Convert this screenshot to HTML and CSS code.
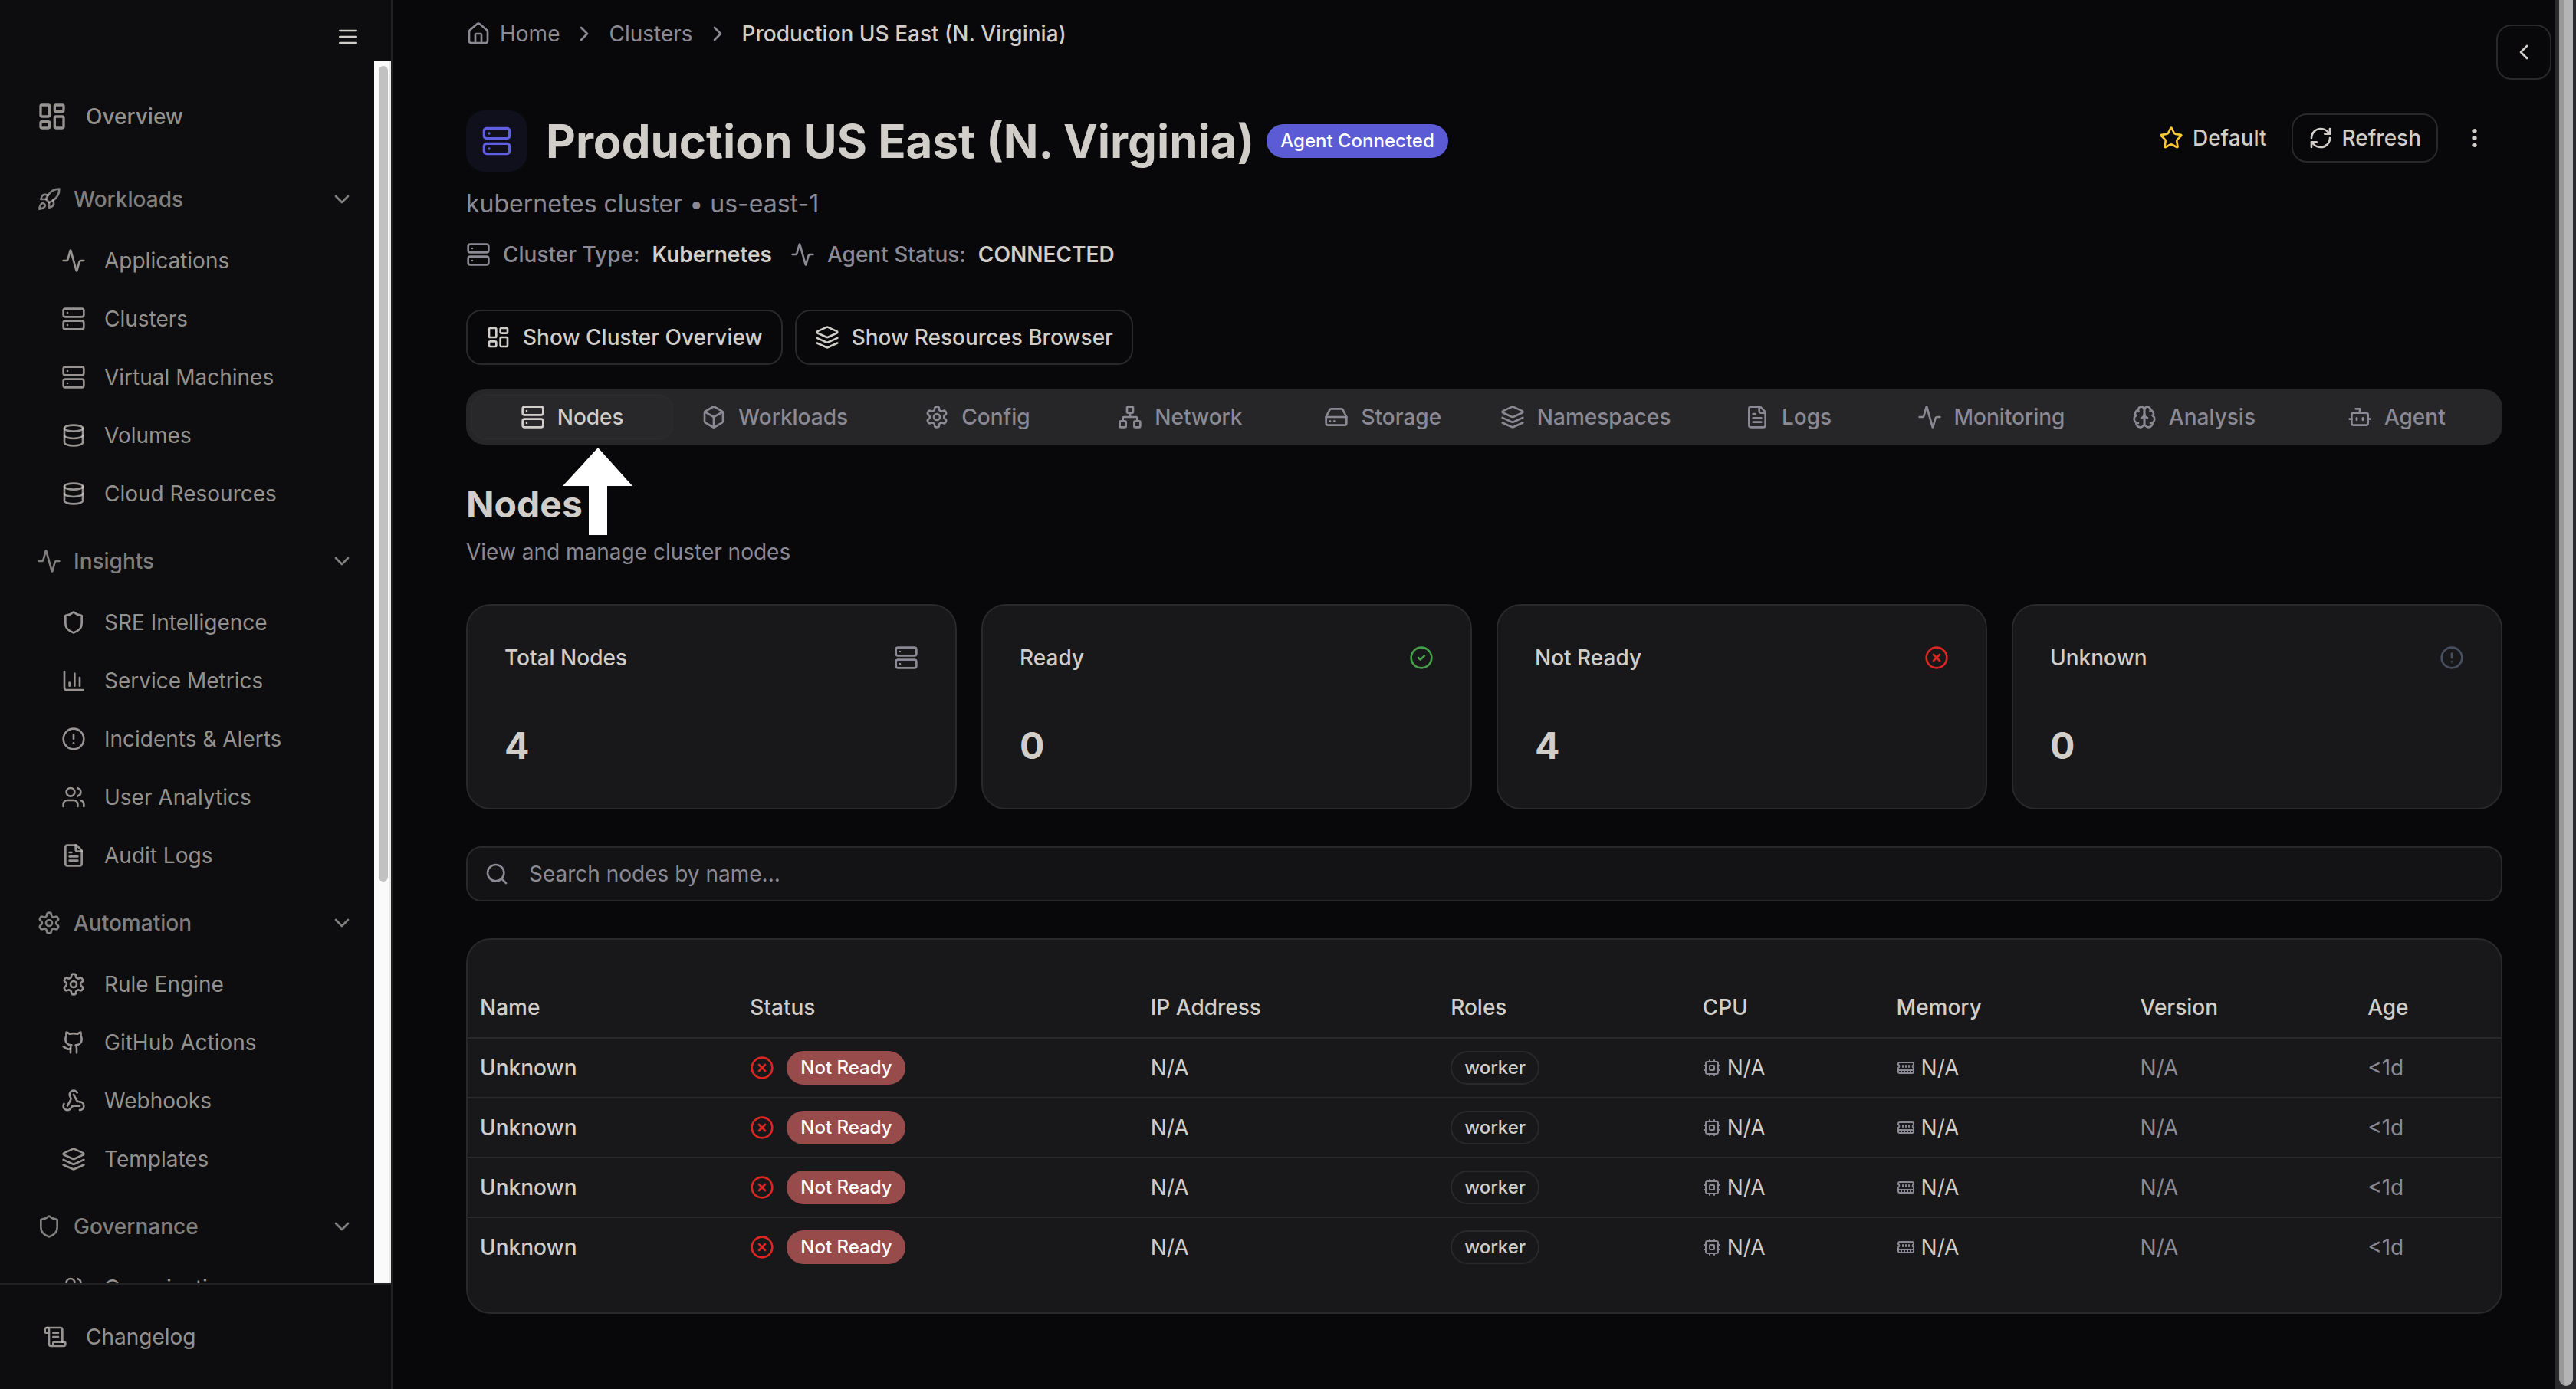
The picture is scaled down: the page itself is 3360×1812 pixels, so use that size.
FILE: index.html
```html
<!DOCTYPE html>
<html lang="en">
<head>
    <meta charset="UTF-8">
    <meta name="viewport" content="width=device-width, initial-scale=1.0">
    <title>Production US East (N. Virginia)</title>
    <link rel="stylesheet" href="styles.css">
</head>
<body>

    <!-- Icon sprite -->
    <svg class="sprite" aria-hidden="true">
        <symbol id="i-menu" viewBox="0 0 24 24"><path d="M4 6h16M4 12h16M4 18h16"/></symbol>
        <symbol id="i-dashboard" viewBox="0 0 24 24"><rect x="3" y="3" width="7" height="9" rx="1"/><rect x="14" y="3" width="7" height="5" rx="1"/><rect x="14" y="12" width="7" height="9" rx="1"/><rect x="3" y="16" width="7" height="5" rx="1"/></symbol>
        <symbol id="i-rocket" viewBox="0 0 24 24"><path d="M4.500 16.500c-1.500 1.260-2 5-2 5s3.740-.5 5-2c.71-.84.7-2.130-.09-2.910a2.180 2.180 0 0 0-2.910-.09z"/><path d="m12 15-3-3a22 22 0 0 1 2-3.950A12.880 12.880 0 0 1 22 2c0 2.720-.78 7.500-6 11a22.350 22.350 0 0 1-4 2z"/><path d="M9 12H4s.55-3.030 2-4c1.620-1.080 5 0 5 0"/><path d="M12 15v5s3.030-.55 4-2c1.080-1.620 0-5 0-5"/></symbol>
        <symbol id="i-activity" viewBox="0 0 24 24"><path d="M22 12h-2.480a2 2 0 0 0-1.930 1.460l-2.350 8.360a.25.25 0 0 1-.48 0L9.240 2.180a.25.25 0 0 0-.48 0l-2.350 8.360A2 2 0 0 1 4.490 12H2"/></symbol>
        <symbol id="i-server" viewBox="0 0 24 24"><rect x="2" y="2" width="20" height="8" rx="2"/><rect x="2" y="14" width="20" height="8" rx="2"/><path d="M6 6h.01"/><path d="M6 18h.01"/></symbol>
        <symbol id="i-database" viewBox="0 0 24 24"><ellipse cx="12" cy="5" rx="9" ry="3"/><path d="M3 5V19A9 3 0 0 0 21 19V5"/><path d="M3 12A9 3 0 0 0 21 12"/></symbol>
        <symbol id="i-shield" viewBox="0 0 24 24"><path d="M20 13c0 5-3.500 7.500-7.660 8.950a1 1 0 0 1-.67-.01C7.500 20.500 4 18 4 13V6a1 1 0 0 1 1-1c2 0 4.500-1.200 6.240-2.720a1.170 1.170 0 0 1 1.520 0C14.510 3.810 17 5 19 5a1 1 0 0 1 1 1z"/></symbol>
        <symbol id="i-chart" viewBox="0 0 24 24"><path d="M3 3v16a2 2 0 0 0 2 2h16"/><path d="M18 17V9"/><path d="M13 17V5"/><path d="M8 17v-3"/></symbol>
        <symbol id="i-alert" viewBox="0 0 24 24"><circle cx="12" cy="12" r="10"/><path d="M12 8v4"/><path d="M12 16h.01"/></symbol>
        <symbol id="i-users" viewBox="0 0 24 24"><path d="M16 21v-2a4 4 0 0 0-4-4H6a4 4 0 0 0-4 4v2"/><circle cx="9" cy="7" r="4"/><path d="M22 21v-2a4 4 0 0 0-3-3.870"/><path d="M16 3.130a4 4 0 0 1 0 7.750"/></symbol>
        <symbol id="i-file" viewBox="0 0 24 24"><path d="M15 2H6a2 2 0 0 0-2 2v16a2 2 0 0 0 2 2h12a2 2 0 0 0 2-2V7Z"/><path d="M14 2v4a2 2 0 0 0 2 2h4"/><path d="M10 9H8"/><path d="M16 13H8"/><path d="M16 17H8"/></symbol>
        <symbol id="i-settings" viewBox="0 0 24 24"><path d="M12.220 2h-.44a2 2 0 0 0-2 2v.18a2 2 0 0 1-1 1.730l-.43.25a2 2 0 0 1-2 0l-.15-.08a2 2 0 0 0-2.730.73l-.22.38a2 2 0 0 0 .73 2.730l.15.1a2 2 0 0 1 1 1.720v.51a2 2 0 0 1-1 1.740l-.15.09a2 2 0 0 0-.73 2.730l.22.38a2 2 0 0 0 2.730.73l.15-.08a2 2 0 0 1 2 0l.43.25a2 2 0 0 1 1 1.730V20a2 2 0 0 0 2 2h.44a2 2 0 0 0 2-2v-.18a2 2 0 0 1 1-1.730l.43-.25a2 2 0 0 1 2 0l.15.08a2 2 0 0 0 2.730-.73l.22-.39a2 2 0 0 0-.73-2.730l-.15-.08a2 2 0 0 1-1-1.740v-.5a2 2 0 0 1 1-1.740l.15-.09a2 2 0 0 0 .73-2.730l-.22-.38a2 2 0 0 0-2.730-.73l-.15.08a2 2 0 0 1-2 0l-.43-.25a2 2 0 0 1-1-1.730V4a2 2 0 0 0-2-2z"/><circle cx="12" cy="12" r="3"/></symbol>
        <symbol id="i-github" viewBox="0 0 24 24"><path d="M15 22v-4a4.800 4.800 0 0 0-1-3.500c3 0 6-2 6-5.500.08-1.250-.27-2.480-1-3.500.28-1.150.28-2.350 0-3.500 0 0-1 0-3 1.500-2.640-.5-5.360-.5-8 0C6 2 5 2 5 2c-.3 1.150-.3 2.350 0 3.500A5.403 5.403 0 0 0 4 9c0 3.500 3 5.500 6 5.500-.39.49-.68 1.050-.85 1.650-.17.6-.22 1.230-.15 1.850v4"/><path d="M9 18c-4.510 2-5-2-7-2"/></symbol>
        <symbol id="i-webhook" viewBox="0 0 24 24"><path d="M18 16.980h-5.990c-1.100 0-1.950.94-2.480 1.900A4 4 0 0 1 2 17c.01-.7.2-1.400.57-2"/><path d="m6 17 3.130-5.780c.53-.97.1-2.180-.5-3.100a4 4 0 1 1 6.890-4.060"/><path d="m12 6 3.130 5.730C15.660 12.700 16.900 13 18 13a4 4 0 0 1 0 8"/></symbol>
        <symbol id="i-layers" viewBox="0 0 24 24"><path d="M12.830 2.180a2 2 0 0 0-1.660 0L2.600 6.080a1 1 0 0 0 0 1.830l8.580 3.910a2 2 0 0 0 1.660 0l8.580-3.900a1 1 0 0 0 0-1.830Z"/><path d="m22 17.650-9.170 4.160a2 2 0 0 1-1.660 0L2 17.650"/><path d="m22 12.650-9.170 4.160a2 2 0 0 1-1.660 0L2 12.650"/></symbol>
        <symbol id="i-scroll" viewBox="0 0 24 24"><path d="M15 12h-5"/><path d="M15 8h-5"/><path d="M19 17V5a2 2 0 0 0-2-2H4"/><path d="M8 21h12a2 2 0 0 0 2-2v-1a1 1 0 0 0-1-1H11a1 1 0 0 0-1 1v1a2 2 0 1 1-4 0V5a2 2 0 1 0-4 0v2a1 1 0 0 0 1 1h3"/></symbol>
        <symbol id="i-down" viewBox="0 0 24 24"><path d="m6 9 6 6 6-6"/></symbol>
        <symbol id="i-right" viewBox="0 0 24 24"><path d="m9 18 6-6-6-6"/></symbol>
        <symbol id="i-left" viewBox="0 0 24 24"><path d="m15 18-6-6 6-6"/></symbol>
        <symbol id="i-home" viewBox="0 0 24 24"><path d="M15 21v-8a1 1 0 0 0-1-1h-4a1 1 0 0 0-1 1v8"/><path d="M3 10a2 2 0 0 1 .709-1.528l7-5.999a2 2 0 0 1 2.582 0l7 5.999A2 2 0 0 1 21 10v9a2 2 0 0 1-2 2H5a2 2 0 0 1-2-2z"/></symbol>
        <symbol id="i-star" viewBox="0 0 24 24"><path d="M11.525 2.295a.53.53 0 0 1 .95 0l2.310 4.679a2.123 2.123 0 0 0 1.595 1.160l5.166.756a.53.53 0 0 1 .294.904l-3.736 3.638a2.123 2.123 0 0 0-.611 1.878l.882 5.140a.53.53 0 0 1-.771.560l-4.618-2.428a2.122 2.122 0 0 0-1.973 0L6.396 21.010a.53.53 0 0 1-.77-.560l.881-5.139a2.122 2.122 0 0 0-.611-1.879L2.160 9.795a.53.53 0 0 1 .294-.906l5.165-.755a2.122 2.122 0 0 0 1.597-1.160z"/></symbol>
        <symbol id="i-refresh" viewBox="0 0 24 24"><path d="M3 12a9 9 0 0 1 9-9 9.750 9.750 0 0 1 6.740 2.740L21 8"/><path d="M21 3v5h-5"/><path d="M21 12a9 9 0 0 1-9 9 9.750 9.750 0 0 1-6.740-2.740L3 16"/><path d="M8 16H3v5"/></symbol>
        <symbol id="i-more" viewBox="0 0 24 24"><circle cx="12" cy="12" r="1"/><circle cx="12" cy="5" r="1"/><circle cx="12" cy="19" r="1"/></symbol>
        <symbol id="i-box" viewBox="0 0 24 24"><path d="M21 8a2 2 0 0 0-1-1.730l-7-4a2 2 0 0 0-2 0l-7 4A2 2 0 0 0 3 8v8a2 2 0 0 0 1 1.730l7 4a2 2 0 0 0 2 0l7-4A2 2 0 0 0 21 16Z"/><path d="m3.300 7 8.700 5 8.700-5"/><path d="M12 22V12"/></symbol>
        <symbol id="i-network" viewBox="0 0 24 24"><rect x="16" y="16" width="6" height="6" rx="1"/><rect x="2" y="16" width="6" height="6" rx="1"/><rect x="9" y="2" width="6" height="6" rx="1"/><path d="M5 16v-3a1 1 0 0 1 1-1h12a1 1 0 0 1 1 1v3"/><path d="M12 12V8"/></symbol>
        <symbol id="i-drive" viewBox="0 0 24 24"><path d="M22 12H2"/><path d="M5.450 5.110 2 12v6a2 2 0 0 0 2 2h16a2 2 0 0 0 2-2v-6l-3.450-6.890A2 2 0 0 0 16.760 4H7.240a2 2 0 0 0-1.790 1.110z"/><path d="M6 16h.01"/><path d="M10 16h.01"/></symbol>
        <symbol id="i-brain" viewBox="0 0 24 24"><path d="M12 5a3 3 0 1 0-5.997.125 4 4 0 0 0-2.526 5.770 4 4 0 0 0 .556 6.588A4 4 0 1 0 12 18Z"/><path d="M12 5a3 3 0 1 1 5.997.125 4 4 0 0 1 2.526 5.770 4 4 0 0 1-.556 6.588A4 4 0 1 1 12 18Z"/><path d="M15 13a4.500 4.500 0 0 1-3-4 4.500 4.500 0 0 1-3 4"/><path d="M17.599 6.500a3 3 0 0 0 .399-1.375"/><path d="M6.003 5.125A3 3 0 0 0 6.401 6.500"/><path d="M3.477 10.896a4 4 0 0 1 .585-.396"/><path d="M19.938 10.500a4 4 0 0 1 .585.396"/><path d="M6 18a4 4 0 0 1-1.967-.516"/><path d="M19.967 17.484A4 4 0 0 1 18 18"/></symbol>
        <symbol id="i-bot" viewBox="0 0 24 24"><path d="M12 8V4H8"/><rect x="4" y="8" width="16" height="12" rx="2"/><path d="M2 14h2"/><path d="M20 14h2"/><path d="M15 13v2"/><path d="M9 13v2"/></symbol>
        <symbol id="i-check" viewBox="0 0 24 24"><circle cx="12" cy="12" r="10"/><path d="m9 12 2 2 4-4"/></symbol>
        <symbol id="i-x" viewBox="0 0 24 24"><circle cx="12" cy="12" r="10"/><path d="m15 9-6 6"/><path d="m9 9 6 6"/></symbol>
        <symbol id="i-search" viewBox="0 0 24 24"><circle cx="11" cy="11" r="8"/><path d="m21 21-4.300-4.300"/></symbol>
        <symbol id="i-cpu" viewBox="0 0 24 24"><rect x="4" y="4" width="16" height="16" rx="2"/><rect x="9" y="9" width="6" height="6" rx="1"/><path d="M15 2v2M15 20v2M2 15h2M2 9h2M20 15h2M20 9h2M9 2v2M9 20v2"/></symbol>
        <symbol id="i-memory" viewBox="0 0 24 24"><path d="M6 19v-3M10 19v-3M14 19v-3M18 19v-3M8 11V9M16 11V9M12 11V9M2 15h20"/><path d="M2 7a2 2 0 0 1 2-2h16a2 2 0 0 1 2 2v1.100a2 2 0 0 0 0 3.837V17a2 2 0 0 1-2 2H4a2 2 0 0 1-2-2v-5.100a2 2 0 0 0 0-3.837Z"/></symbol>
    </svg>

    <div class="app">

        <aside class="sidebar">
            <div class="sidebar-top">
                <button class="icon-btn" aria-label="Toggle sidebar"><svg class="icon"><use href="#i-menu"/></svg></button>
            </div>

            <div class="sidebar-scroll">
                <nav class="nav">
                    <a class="nav-main" href="#"><svg class="icon icon-lg"><use href="#i-dashboard"/></svg>Overview</a>

                    <div class="nav-group">
                        <button class="nav-head"><svg class="icon"><use href="#i-rocket"/></svg><span>Workloads</span><svg class="icon"><use href="#i-down"/></svg></button>
                        <a class="nav-item" href="#"><svg class="icon"><use href="#i-activity"/></svg>Applications</a>
                        <a class="nav-item" href="#"><svg class="icon"><use href="#i-server"/></svg>Clusters</a>
                        <a class="nav-item" href="#"><svg class="icon"><use href="#i-server"/></svg>Virtual Machines</a>
                        <a class="nav-item" href="#"><svg class="icon"><use href="#i-database"/></svg>Volumes</a>
                        <a class="nav-item" href="#"><svg class="icon"><use href="#i-database"/></svg>Cloud Resources</a>
                    </div>

                    <div class="nav-group">
                        <button class="nav-head"><svg class="icon"><use href="#i-activity"/></svg><span>Insights</span><svg class="icon"><use href="#i-down"/></svg></button>
                        <a class="nav-item" href="#"><svg class="icon"><use href="#i-shield"/></svg>SRE Intelligence</a>
                        <a class="nav-item" href="#"><svg class="icon"><use href="#i-chart"/></svg>Service Metrics</a>
                        <a class="nav-item" href="#"><svg class="icon"><use href="#i-alert"/></svg>Incidents &amp; Alerts</a>
                        <a class="nav-item" href="#"><svg class="icon"><use href="#i-users"/></svg>User Analytics</a>
                        <a class="nav-item" href="#"><svg class="icon"><use href="#i-file"/></svg>Audit Logs</a>
                    </div>

                    <div class="nav-group">
                        <button class="nav-head"><svg class="icon"><use href="#i-settings"/></svg><span>Automation</span><svg class="icon"><use href="#i-down"/></svg></button>
                        <a class="nav-item" href="#"><svg class="icon"><use href="#i-settings"/></svg>Rule Engine</a>
                        <a class="nav-item" href="#"><svg class="icon"><use href="#i-github"/></svg>GitHub Actions</a>
                        <a class="nav-item" href="#"><svg class="icon"><use href="#i-webhook"/></svg>Webhooks</a>
                        <a class="nav-item" href="#"><svg class="icon"><use href="#i-layers"/></svg>Templates</a>
                    </div>

                    <div class="nav-group">
                        <button class="nav-head"><svg class="icon"><use href="#i-shield"/></svg><span>Governance</span><svg class="icon"><use href="#i-down"/></svg></button>
                        <a class="nav-item" href="#"><svg class="icon"><use href="#i-users"/></svg>Organizations</a>
                    </div>
                </nav>
                <div class="nav-track"><div class="nav-thumb"></div></div>
            </div>

            <div class="sidebar-foot">
                <a class="nav-main" href="#"><svg class="icon"><use href="#i-scroll"/></svg>Changelog</a>
            </div>
        </aside>

        <main class="main">
            <button class="panel-toggle" aria-label="Open panel"><svg class="icon"><use href="#i-left"/></svg></button>

            <nav class="breadcrumb" aria-label="Breadcrumb">
                <a class="crumb" href="#"><svg class="icon"><use href="#i-home"/></svg>Home</a>
                <svg class="icon"><use href="#i-right"/></svg>
                <a class="crumb" href="#">Clusters</a>
                <svg class="icon"><use href="#i-right"/></svg>
                <span class="crumb-current">Production US East (N. Virginia)</span>
            </nav>

            <header class="page-head">
                <div class="page-info">
                    <div class="title-row">
                        <div class="title-icon"><svg class="icon icon-lg"><use href="#i-server"/></svg></div>
                        <h1>Production US East (N. Virginia)</h1>
                        <span class="badge badge-primary">Agent Connected</span>
                    </div>
                    <p class="page-sub">kubernetes cluster • us-east-1</p>
                    <div class="meta">
                        <div class="meta-item"><svg class="icon"><use href="#i-server"/></svg><span>Cluster Type:</span><strong>Kubernetes</strong></div>
                        <div class="meta-item"><svg class="icon"><use href="#i-activity"/></svg><span>Agent Status:</span><strong>CONNECTED</strong></div>
                    </div>
                </div>
                <div class="actions">
                    <button class="btn btn-sm btn-ghost"><svg class="icon star"><use href="#i-star"/></svg>Default</button>
                    <button class="btn btn-sm"><svg class="icon"><use href="#i-refresh"/></svg>Refresh</button>
                    <button class="btn btn-sm btn-ghost" aria-label="More"><svg class="icon"><use href="#i-more"/></svg></button>
                </div>
            </header>

            <div class="toggles">
                <button class="btn"><svg class="icon"><use href="#i-dashboard"/></svg>Show Cluster Overview</button>
                <button class="btn"><svg class="icon"><use href="#i-layers"/></svg>Show Resources Browser</button>
            </div>

            <div class="tabs" role="tablist">
                <button class="tab active" role="tab" aria-selected="true"><svg class="icon"><use href="#i-server"/></svg>Nodes</button>
                <button class="tab" role="tab"><svg class="icon"><use href="#i-box"/></svg>Workloads</button>
                <button class="tab" role="tab"><svg class="icon"><use href="#i-settings"/></svg>Config</button>
                <button class="tab" role="tab"><svg class="icon"><use href="#i-network"/></svg>Network</button>
                <button class="tab" role="tab"><svg class="icon"><use href="#i-drive"/></svg>Storage</button>
                <button class="tab" role="tab"><svg class="icon"><use href="#i-layers"/></svg>Namespaces</button>
                <button class="tab" role="tab"><svg class="icon"><use href="#i-file"/></svg>Logs</button>
                <button class="tab" role="tab"><svg class="icon"><use href="#i-activity"/></svg>Monitoring</button>
                <button class="tab" role="tab"><svg class="icon"><use href="#i-brain"/></svg>Analysis</button>
                <button class="tab" role="tab"><svg class="icon"><use href="#i-bot"/></svg>Agent</button>
            </div>

            <section class="section">
                <svg class="pointer" viewBox="0 0 92 114" aria-hidden="true"><path d="M46 0 91 50H58v64H34V50H0z"/></svg>
                <h2>Nodes</h2>
                <p>View and manage cluster nodes</p>
            </section>

            <div class="cards">
                <div class="card">
                    <div class="card-head"><h3>Total Nodes</h3><svg class="icon muted"><use href="#i-server"/></svg></div>
                    <div class="card-value">4</div>
                </div>
                <div class="card">
                    <div class="card-head"><h3>Ready</h3><svg class="icon green"><use href="#i-check"/></svg></div>
                    <div class="card-value">0</div>
                </div>
                <div class="card">
                    <div class="card-head"><h3>Not Ready</h3><svg class="icon red"><use href="#i-x"/></svg></div>
                    <div class="card-value">4</div>
                </div>
                <div class="card">
                    <div class="card-head"><h3>Unknown</h3><svg class="icon slate"><use href="#i-alert"/></svg></div>
                    <div class="card-value">0</div>
                </div>
            </div>

            <label class="search">
                <svg class="icon"><use href="#i-search"/></svg>
                <input type="text" placeholder="Search nodes by name..." aria-label="Search nodes by name">
            </label>

            <div class="table-card">
                <table>
                    <thead>
                        <tr><th>Name</th><th>Status</th><th>IP Address</th><th>Roles</th><th>CPU</th><th>Memory</th><th>Version</th><th>Age</th></tr>
                    </thead>
                    <tbody>
                        <tr>
                            <td class="name">Unknown</td>
                            <td><div class="cell cell-status"><svg class="icon red"><use href="#i-x"/></svg><span class="badge badge-danger">Not Ready</span></div></td>
                            <td>N/A</td>
                            <td><div class="cell"><span class="badge badge-outline">worker</span></div></td>
                            <td><div class="cell"><svg class="icon icon-sm muted"><use href="#i-cpu"/></svg>N/A</div></td>
                            <td><div class="cell"><svg class="icon icon-sm muted"><use href="#i-memory"/></svg>N/A</div></td>
                            <td class="muted">N/A</td>
                            <td class="muted">&lt;1d</td>
                        </tr>
                        <tr>
                            <td class="name">Unknown</td>
                            <td><div class="cell cell-status"><svg class="icon red"><use href="#i-x"/></svg><span class="badge badge-danger">Not Ready</span></div></td>
                            <td>N/A</td>
                            <td><div class="cell"><span class="badge badge-outline">worker</span></div></td>
                            <td><div class="cell"><svg class="icon icon-sm muted"><use href="#i-cpu"/></svg>N/A</div></td>
                            <td><div class="cell"><svg class="icon icon-sm muted"><use href="#i-memory"/></svg>N/A</div></td>
                            <td class="muted">N/A</td>
                            <td class="muted">&lt;1d</td>
                        </tr>
                        <tr>
                            <td class="name">Unknown</td>
                            <td><div class="cell cell-status"><svg class="icon red"><use href="#i-x"/></svg><span class="badge badge-danger">Not Ready</span></div></td>
                            <td>N/A</td>
                            <td><div class="cell"><span class="badge badge-outline">worker</span></div></td>
                            <td><div class="cell"><svg class="icon icon-sm muted"><use href="#i-cpu"/></svg>N/A</div></td>
                            <td><div class="cell"><svg class="icon icon-sm muted"><use href="#i-memory"/></svg>N/A</div></td>
                            <td class="muted">N/A</td>
                            <td class="muted">&lt;1d</td>
                        </tr>
                        <tr>
                            <td class="name">Unknown</td>
                            <td><div class="cell cell-status"><svg class="icon red"><use href="#i-x"/></svg><span class="badge badge-danger">Not Ready</span></div></td>
                            <td>N/A</td>
                            <td><div class="cell"><span class="badge badge-outline">worker</span></div></td>
                            <td><div class="cell"><svg class="icon icon-sm muted"><use href="#i-cpu"/></svg>N/A</div></td>
                            <td><div class="cell"><svg class="icon icon-sm muted"><use href="#i-memory"/></svg>N/A</div></td>
                            <td class="muted">N/A</td>
                            <td class="muted">&lt;1d</td>
                        </tr>
                    </tbody>
                </table>
            </div>
        </main>

        <div class="page-track"><div class="page-thumb"></div></div>
    </div>

</body>
</html>
```
FILE: styles.css
```css
:root {
    --bg: #08080a;
    --sidebar: #0d0d0f;
    --card: #18181a;
    --border: #29292c;
    --text: #d1cdc9;
    --muted: #8b8a94;
}

* {
    box-sizing: border-box;
}

body {
    margin: 0;
    background: var(--bg);
    color: var(--text);
    font-family: Inter, "Liberation Sans", sans-serif;
    font-size: 28px;
    line-height: 40px;
}

h1, h2, h3, p {
    margin: 0;
}

a {
    color: inherit;
    text-decoration: none;
}

button, input {
    font: inherit;
    color: inherit;
    background: none;
    border: 0;
    padding: 0;
}

.sprite {
    display: none;
}

.icon {
    flex: none;
    width: 32px;
    height: 32px;
    fill: none;
    stroke: currentColor;
    stroke-width: 2;
    stroke-linecap: round;
    stroke-linejoin: round;
}

.icon-lg {
    width: 40px;
    height: 40px;
}

.icon-sm {
    width: 24px;
    height: 24px;
}

.muted {
    color: var(--muted);
}

.green {
    color: #43a047;
}

.red {
    color: #dc2621;
}

.slate {
    color: #475060;
}

.star {
    color: #fac832;
}

.app {
    display: flex;
    height: 100vh;
    overflow: hidden;
}

/* Sidebar */
.sidebar {
    flex: none;
    display: flex;
    flex-direction: column;
    width: 512px;
    background: var(--sidebar);
    border-right: 2px solid #212124;
    color: rgba(209, 205, 201, 0.7);
}

.sidebar-top {
    flex: none;
    display: flex;
    justify-content: flex-end;
    align-items: center;
    height: 80px;
    padding: 16px 24px 0;
    color: var(--text);
}

.icon-btn {
    display: flex;
    padding: 16px;
}

.sidebar-scroll {
    flex: 1;
    display: flex;
    min-height: 0;
    overflow: hidden;
}

.nav {
    flex: 1;
    padding: 36px 24px 0 24px;
}

.nav-main {
    display: flex;
    align-items: center;
    gap: 24px;
    height: 72px;
    padding: 0 24px;
}

.nav > .nav-main {
    margin-bottom: 36px;
    font-weight: 500;
}

.nav-group {
    display: flex;
    flex-direction: column;
    gap: 4px;
    margin-bottom: 16px;
}

.nav-head {
    display: flex;
    align-items: center;
    gap: 16px;
    height: 72px;
    margin-bottom: 4px;
    padding: 0 2px 0 24px;
    color: rgba(209, 205, 201, 0.6);
    font-weight: 500;
    text-align: left;
}

.nav-head span {
    flex: 1;
}

.nav-item {
    display: flex;
    align-items: center;
    gap: 24px;
    height: 72px;
    padding-left: 56px;
}

.nav-track {
    flex: none;
    width: 22px;
    padding: 6px 4px 0 6px;
    background: #fafafa;
    border-right: 2px solid #e8e8e8;
}

.nav-thumb {
    width: 12px;
    height: 67%;
    border-radius: 6px;
    background: #c1c1c1;
}

.sidebar-foot {
    flex: none;
    height: 138px;
    padding: 32px;
    border-top: 2px solid #212124;
}

/* Main column */
.main {
    position: relative;
    flex: 1;
    min-width: 0;
    padding: 24px 68px 0 96px;
}

.panel-toggle {
    position: absolute;
    top: 32px;
    right: 4px;
    display: flex;
    align-items: center;
    justify-content: center;
    width: 72px;
    height: 72px;
    border: 2px solid var(--border);
    border-radius: 20px;
    background: var(--bg);
}

.breadcrumb {
    display: flex;
    align-items: center;
    gap: 16px;
    color: var(--muted);
}

.crumb {
    display: flex;
    align-items: center;
    gap: 12px;
}

.crumb-current {
    color: var(--text);
    font-weight: 500;
}

.page-head {
    display: flex;
    justify-content: space-between;
    align-items: flex-start;
    margin-top: 80px;
}

.title-row {
    display: flex;
    align-items: center;
    gap: 16px;
    height: 80px;
}

.title-icon {
    display: flex;
    align-items: center;
    justify-content: center;
    width: 80px;
    height: 80px;
    margin-right: 8px;
    border-radius: 24px;
    background: #100f1c;
    color: #5f5fe0;
}

h1 {
    font-size: 60px;
    line-height: 72px;
    font-weight: 700;
}

.page-sub {
    margin-top: 18px;
    color: var(--muted);
    font-size: 32px;
    line-height: 48px;
}

.meta {
    display: flex;
    gap: 24px;
    margin-top: 22px;
}

.meta-item {
    display: flex;
    align-items: center;
    gap: 16px;
    color: var(--muted);
    font-weight: 500;
}

.meta-item strong {
    color: var(--text);
    font-weight: 600;
}

.badge {
    display: inline-flex;
    align-items: center;
    height: 44px;
    padding: 0 18px;
    border-radius: 22px;
    font-size: 24px;
    line-height: 32px;
    font-weight: 500;
}

.badge-primary {
    background: #5b5bd6;
    color: #fff;
}

.badge-danger {
    background: #984b4b;
    color: #fff;
}

.badge-outline {
    padding: 0 16px;
    border: 2px solid var(--border);
}

.actions {
    display: flex;
    gap: 12px;
    margin-top: 4px;
}

.btn {
    display: flex;
    align-items: center;
    gap: 16px;
    height: 72px;
    padding: 0 24px;
    border: 2px solid var(--border);
    border-radius: 20px;
    font-weight: 500;
}

.btn-sm {
    gap: 12px;
    height: 64px;
    padding: 0 20px;
}

.btn-ghost {
    padding: 0 18px;
    border-color: transparent;
}

.toggles {
    display: flex;
    gap: 16px;
    margin-top: 52px;
}

/* Tabs */
.tabs {
    display: grid;
    grid-template-columns: repeat(10, 1fr);
    height: 72px;
    margin-top: 32px;
    padding: 6px;
    border-radius: 24px;
    background: #262628;
}

.tab {
    display: flex;
    align-items: center;
    justify-content: center;
    gap: 16px;
    border: 2px solid transparent;
    border-radius: 20px;
    color: var(--muted);
    font-weight: 500;
}

.tab.active {
    border-color: #2b2b2d;
    background: #28282a;
    color: var(--text);
}

.section {
    position: relative;
    margin-top: 44px;
    color: var(--muted);
}

.section h2 {
    margin-bottom: 8px;
    color: var(--text);
    font-size: 48px;
    line-height: 68px;
    font-weight: 700;
}

/* Arrow pointing at the active tab */
.pointer {
    position: absolute;
    top: -40px;
    left: 126px;
    width: 92px;
    height: 114px;
    fill: #fff;
}

.cards {
    display: grid;
    grid-template-columns: repeat(4, 1fr);
    gap: 32px;
    margin-top: 48px;
}

.card {
    padding: 48px;
    border: 2px solid var(--border);
    border-radius: 32px;
    background: var(--card);
}

.card-head {
    display: flex;
    align-items: center;
    justify-content: space-between;
    margin-bottom: 62px;
}

.card-head h3 {
    font-size: 28px;
    font-weight: 500;
}

.card-value {
    font-size: 48px;
    line-height: 66px;
    font-weight: 700;
}

.search {
    display: flex;
    align-items: center;
    gap: 26px;
    height: 72px;
    margin-top: 48px;
    padding: 0 22px;
    border: 2px solid var(--border);
    border-radius: 20px;
    background: #131315;
    color: var(--muted);
}

.search input {
    flex: 1;
    height: 68px;
    outline: none;
}

.search input::placeholder {
    color: var(--muted);
    opacity: 1;
}

/* Nodes table */
.table-card {
    margin-top: 48px;
    padding: 48px 0;
    border: 2px solid var(--border);
    border-radius: 32px;
    background: var(--card);
}

table {
    width: 100%;
    border-collapse: collapse;
}

th {
    height: 80px;
    padding: 0 16px;
    font-weight: 500;
    text-align: left;
}

td {
    height: 78px;
    padding: 15px 16px;
}

tr {
    border-bottom: 2px solid var(--border);
}

tbody tr:last-child {
    border-bottom: 0;
}

tbody tr:last-child td {
    height: 76px;
}

.name {
    font-weight: 500;
}

.cell {
    display: flex;
    align-items: center;
    gap: 8px;
}

.cell-status {
    gap: 16px;
}

/* Page scrollbar */
.page-track {
    flex: none;
    width: 28px;
    padding: 0 4px 4px 6px;
    background: #2a2a2c;
}

.page-thumb {
    height: 100%;
    border-left: 6px solid #999;
    border-radius: 0 0 9px 9px;
    background: #b4b4b4;
}
```
